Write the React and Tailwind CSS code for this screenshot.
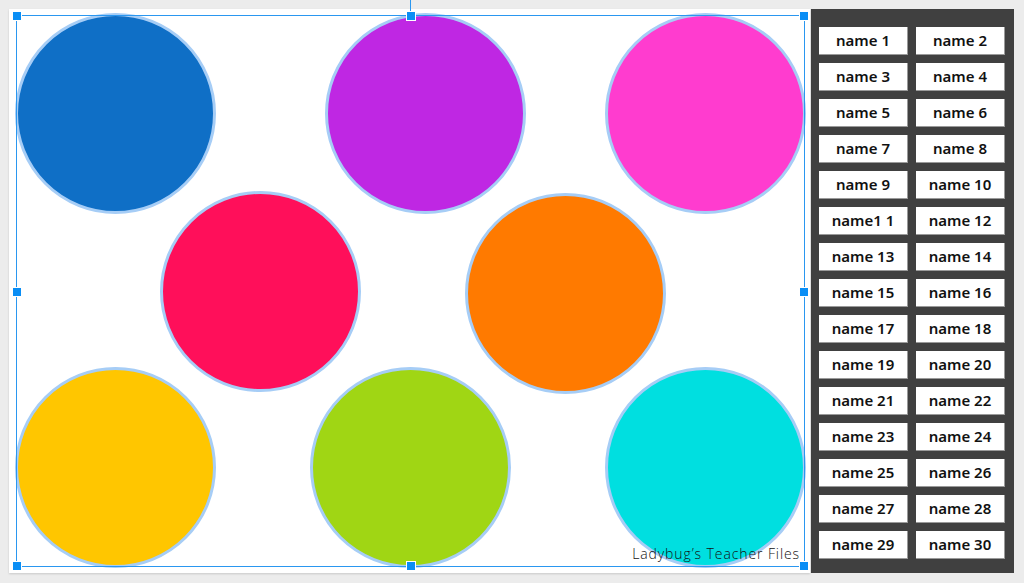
const circles = [
  { color: "bg-[#0f6fc6]", pos: "left-[6px] top-[4px]" },
  { color: "bg-[#bf27e3]", pos: "left-[316px] top-[4px]" },
  { color: "bg-[#ff3ccf]", pos: "left-[596px] top-[4px]" },
  { color: "bg-[#ff0f5a]", pos: "left-[151px] top-[182px]" },
  { color: "bg-[#ff7a00]", pos: "left-[456px] top-[184px]" },
  { color: "bg-[#ffc600]", pos: "left-[6px] top-[358px]" },
  { color: "bg-[#a0d614]", pos: "left-[301px] top-[358px]" },
  { color: "bg-[#00dfe0]", pos: "left-[596px] top-[358px]" },
];

const names = Array.from({ length: 30 }, (_, i) => (i === 10 ? "name1 1" : `name ${i + 1}`));

function Handle({ pos }) {
  return <div className={`absolute w-[10px] h-[10px] bg-[#0a8ef5] border border-white ${pos}`} />;
}

export default function App() {
  return (
    <div className="w-[1024px] h-[583px] bg-[#ececec] flex pt-[9px] pl-[9px] overflow-hidden">
      <div className="relative w-[801px] h-[564px] bg-white shadow-[0_1px_2px_rgba(0,0,0,0.15)]">
        {circles.map((c, i) => (
          <div
            key={i}
            className={`absolute w-[201px] h-[201px] rounded-full border-[3px] border-[#a6cdf6] ${c.color} ${c.pos}`}
          />
        ))}

        <div
          className="absolute right-[10px] top-[534px] text-[14px] font-light tracking-[0.9px] text-[#111]"
          style={{ fontFamily: '"Open Sans", sans-serif' }}
        >
          Ladybug’s Teacher Files
        </div>

        {/* selection frame */}
        <div className="absolute left-[7px] top-[6px] w-[789px] h-[552px] border border-[#2a97f0]">
          <div className="absolute left-[393px] -top-[16px] w-px h-[12px] bg-[#2a97f0]" />
          <Handle pos="-left-[5px] -top-[5px]" />
          <Handle pos="left-[389px] -top-[5px]" />
          <Handle pos="-right-[5px] -top-[5px]" />
          <Handle pos="-left-[5px] top-[271px]" />
          <Handle pos="-right-[5px] top-[271px]" />
          <Handle pos="-left-[5px] -bottom-[5px]" />
          <Handle pos="left-[389px] -bottom-[5px]" />
          <Handle pos="-right-[5px] -bottom-[5px]" />
        </div>
      </div>

      <div className="ml-px w-[203px] h-[564px] bg-[#404040] pt-[18px] pl-[8px]">
        <div className="grid grid-cols-[89px_89px] gap-x-[8px] gap-y-[8px]">
          {names.map((n) => (
            <div
              key={n}
              className="h-[28px] bg-white border-r border-b border-[#9a9a9a] flex items-center justify-center text-[15px] font-semibold text-[#111]"
              style={{ fontFamily: '"Noto Sans", sans-serif' }}
            >
              {n}
            </div>
          ))}
        </div>
      </div>
    </div>
  );
}
